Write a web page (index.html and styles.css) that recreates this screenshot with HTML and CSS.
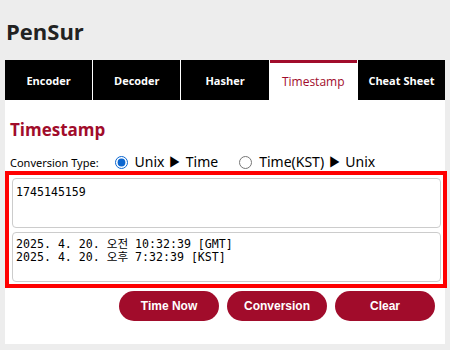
FILE: index.html
```html
<!DOCTYPE html>
<html lang="ko">
<head>
  <meta charset="UTF-8" />
  <meta name="viewport" content="width=device-width, initial-scale=1.0"/>
  <title>PenSur - Timestamp</title>
  <link rel="stylesheet" href="styles.css">
</head>
<body>
  <h1 class="logo">PenSur</h1>

  <div class="panel">
    <nav class="tabs">
      <a class="tab">Encoder</a>
      <a class="tab">Decoder</a>
      <a class="tab">Hasher</a>
      <a class="tab active">Timestamp</a>
      <a class="tab">Cheat Sheet</a>
    </nav>

    <div class="content">
      <h2 class="section-title">Timestamp</h2>

      <div class="type-row">
        <span class="type-label">Conversion Type:</span>
        <label class="radio"><input type="radio" name="mode" checked> Unix ▶ Time</label>
        <label class="radio"><input type="radio" name="mode"> Time(KST) ▶ Unix</label>
      </div>

      <div class="io-box">
        <textarea class="io in">1745145159</textarea>
        <textarea class="io out">2025. 4. 20. 오전 10:32:39 [GMT]
2025. 4. 20. 오후 7:32:39 [KST]</textarea>
      </div>

      <div class="actions">
        <button class="btn">Time Now</button>
        <button class="btn">Conversion</button>
        <button class="btn">Clear</button>
      </div>
    </div>
  </div>
</body>
</html>
```

FILE: styles.css
```css
body {
  margin: 0;
  padding: 0 5px;
  background: #ededed;
  font-family: "Noto Sans", "Open Sans", sans-serif;
  color: #000;
}
.logo {
  margin: 16px 0 14px 1px;
  font-family: "Open Sans", sans-serif;
  font-size: 22px;
  line-height: 30px;
  font-weight: bold;
  color: #222;
}
.panel {
  width: 440px;
  height: 284px;
  background: #fff;
}
.tabs {
  display: flex;
  gap: 1px;
}
.tab {
  flex: 1;
  height: 40px;
  line-height: 41px;
  text-align: center;
  background: #000;
  color: #fff;
  font-family: "Open Sans", sans-serif;
  font-size: 11px;
  font-weight: bold;
  box-sizing: border-box;
}
.tab.active {
  background: #fff;
  color: #a10c2b;
  font-weight: normal;
  font-size: 12px;
  border-top: 3px solid #a10c2b;
  line-height: 37px;
}
.content {
  padding: 0 4px;
}
.section-title {
  margin: 20px 0 12px 1px;
  font-family: "Open Sans", sans-serif;
  font-size: 17px;
  line-height: 20px;
  font-weight: bold;
  color: #a10c2b;
}
.type-row {
  display: flex;
  align-items: center;
  height: 20px;
  padding-left: 1px;
}
.type-label {
  font-size: 11px;
  margin-right: 16px;
}
.radio {
  display: flex;
  align-items: center;
  font-size: 14px;
  margin-right: 21px;
}
.radio input {
  margin: 0 7px 0 0;
  width: 13px;
  height: 13px;
  accent-color: #0b66d0;
}
.io-box {
  margin-top: 3px;
  width: 434px;
  box-sizing: border-box;
  padding: 3px 2px 2px 3px;
  outline: 4px solid #f00;
  display: flex;
  flex-direction: column;
  gap: 4px;
}
.io {
  width: 429px;
  height: 50px;
  box-sizing: border-box;
  border: 1px solid #ccc;
  border-radius: 4px;
  padding: 5px 3px;
  resize: none;
  font-family: "DejaVu Sans Mono", "Noto Sans CJK KR", monospace;
  font-size: 11.6px;
  line-height: 13px;
  color: #000;
}
.io.in {
  padding-top: 7px;
}
.actions {
  display: flex;
  justify-content: flex-end;
  gap: 8px;
  margin-top: 7px;
  padding-right: 6px;
}
.btn {
  width: 100px;
  height: 30px;
  border: none;
  border-radius: 15px;
  background: #a10c2b;
  color: #fff;
  font-family: "Liberation Sans", Arial, sans-serif;
  font-size: 12px;
  font-weight: bold;
}
```
